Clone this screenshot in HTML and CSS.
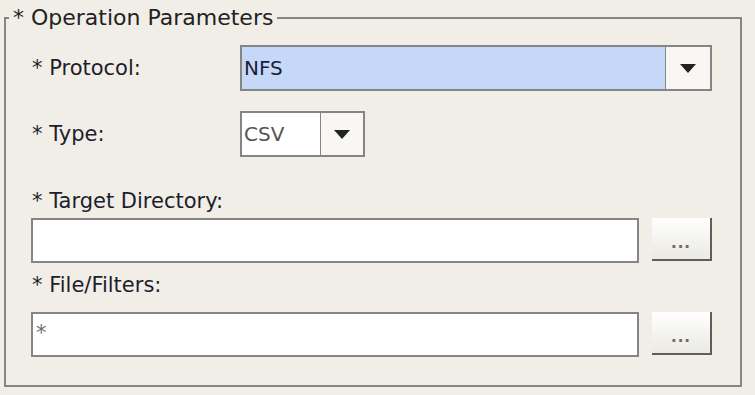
FILE: index.html
```html
<!DOCTYPE html>
<html lang="en">
<head>
    <meta charset="UTF-8">
    <meta name="viewport" content="width=device-width, initial-scale=1.0">
    <title>Operation Parameters</title>
    <link rel="stylesheet" href="styles.css">
</head>
<body>
    <fieldset class="params">
        <legend>* Operation Parameters</legend>
        <div class="params-body">
            <div class="row">
                <label class="label">* Protocol:</label>
                <div class="combo combo-wide">
                    <span class="combo-value selected">NFS</span>
                    <span class="combo-arrow"><i class="tri"></i></span>
                </div>
            </div>

            <div class="row row-type">
                <label class="label">* Type:</label>
                <div class="combo combo-small">
                    <span class="combo-value">CSV</span>
                    <span class="combo-arrow"><i class="tri"></i></span>
                </div>
            </div>

            <label class="label label-dir">* Target Directory:</label>
            <div class="field-row field-dir">
                <div class="field"></div>
                <button type="button" class="browse">...</button>
            </div>

            <label class="label label-files">* File/Filters:</label>
            <div class="field-row field-files">
                <div class="field">*</div>
                <button type="button" class="browse">...</button>
            </div>
        </div>
    </fieldset>
</body>
</html>
```

FILE: styles.css
```css
body {
    margin: 0;
    background-color: #f1eee8;
    font-family: "DejaVu Sans", Arial, sans-serif;
    color: #1d1d2c;
}
.params {
    box-sizing: border-box;
    height: 382px;
    margin: 5px 13px 0 4px;
    padding: 0;
    border: 2px solid #858583;
}
.params legend {
    margin-left: 3px;
    padding: 0 4px;
    font-size: 22px;
    line-height: 26px;
    color: #222;
}
.params-body { padding: 14px 28px 0 25px; }

.row { display: grid; grid-template-columns: 209px 1fr; align-items: center; }
.row-type { margin-top: 20px; grid-template-columns: 209px auto; justify-content: start; }
.label { display: block; font-size: 21px; line-height: 24px; padding-left: 1px; }

.combo { display: flex; box-sizing: border-box; height: 46px; border: 2px solid #858585; background: #fff; }
.combo-small { width: 125px; }
.combo-value { flex: 1; display: flex; align-items: center; padding-left: 2px; font-size: 20px; color: #555; }
.combo-value.selected { background: #c6d8f8; color: #1d1d38; }
.combo-arrow { width: 44px; display: flex; align-items: center; justify-content: center; border-left: 1px solid #858585; background: #f8f7f3; }
.combo-small .combo-value { flex: none; width: 76px; }
.tri { width: 0; height: 0; border-left: 8px solid transparent; border-right: 8px solid transparent; border-top: 9px solid #222; }

.label-dir { margin-top: 32px; }
.label-files { margin-top: 10px; }
.field-row { display: flex; gap: 13px; align-items: flex-start; }
.field-dir { margin-top: 5px; }
.field-files { margin-top: 15px; }
.field {
    flex: 1;
    box-sizing: border-box;
    height: 45px;
    border: 2px solid #858585;
    background: #fff;
    padding: 7px 3px 0;
    font-size: 21px;
    color: #707070;
}
.browse {
    box-sizing: border-box;
    width: 60px;
    height: 43px;
    padding: 8px 0 0;
    border: none;
    border-right: 2px solid #5e5e5e;
    border-bottom: 2px solid #5e5e5e;
    background: linear-gradient(#ffffff, #ebe9e3);
    font-family: "DejaVu Sans", Arial, sans-serif;
    font-size: 15px;
    font-weight: bold;
    letter-spacing: 1px;
    color: #6a6a6a;
    cursor: pointer;
}
```
